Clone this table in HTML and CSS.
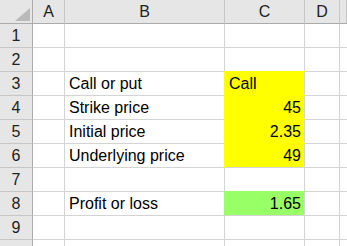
FILE: index.html
```html
<!DOCTYPE html>
<html lang="en">
<head>
  <meta charset="UTF-8" />
  <meta name="viewport" content="width=device-width, initial-scale=1.0"/>
  <title>Option payoff</title>
  <link rel="stylesheet" href="styles.css">
</head>
<body>

  <div class="sheet">
    <div class="row head">
      <div class="cell corner">
        <svg width="32" height="23" viewBox="0 0 32 23"><polygon points="15,21 30,21 30,8" fill="#b9b9b9"/></svg>
      </div>
      <div class="cell col">A</div>
      <div class="cell col">B</div>
      <div class="cell col">C</div>
      <div class="cell col">D</div>
      <div class="cell col"></div>
    </div>

    <div class="row">
      <div class="cell num">1</div>
      <div class="cell"></div><div class="cell"></div><div class="cell"></div><div class="cell"></div><div class="cell"></div>
    </div>
    <div class="row">
      <div class="cell num">2</div>
      <div class="cell"></div><div class="cell"></div><div class="cell"></div><div class="cell"></div><div class="cell"></div>
    </div>
    <div class="row">
      <div class="cell num">3</div>
      <div class="cell"></div>
      <div class="cell">Call or put</div>
      <div class="cell input">Call</div>
      <div class="cell"></div><div class="cell"></div>
    </div>
    <div class="row">
      <div class="cell num">4</div>
      <div class="cell"></div>
      <div class="cell">Strike price</div>
      <div class="cell input value">45</div>
      <div class="cell"></div><div class="cell"></div>
    </div>
    <div class="row">
      <div class="cell num">5</div>
      <div class="cell"></div>
      <div class="cell">Initial price</div>
      <div class="cell input value">2.35</div>
      <div class="cell"></div><div class="cell"></div>
    </div>
    <div class="row">
      <div class="cell num">6</div>
      <div class="cell"></div>
      <div class="cell">Underlying price</div>
      <div class="cell input value">49</div>
      <div class="cell"></div><div class="cell"></div>
    </div>
    <div class="row">
      <div class="cell num">7</div>
      <div class="cell"></div><div class="cell"></div><div class="cell"></div><div class="cell"></div><div class="cell"></div>
    </div>
    <div class="row">
      <div class="cell num">8</div>
      <div class="cell"></div>
      <div class="cell">Profit or loss</div>
      <div class="cell result value">1.65</div>
      <div class="cell"></div><div class="cell"></div>
    </div>
    <div class="row">
      <div class="cell num">9</div>
      <div class="cell"></div><div class="cell"></div><div class="cell"></div><div class="cell"></div><div class="cell"></div>
    </div>
    <div class="row">
      <div class="cell num"></div>
      <div class="cell"></div><div class="cell"></div><div class="cell"></div><div class="cell"></div><div class="cell"></div>
    </div>
  </div>

</body>
</html>
```

FILE: styles.css
```css
body {
  margin: 0;
  padding: 0;
  background: white;
  font-family: "Liberation Sans", Arial, sans-serif;
  font-size: 16px;
  color: #000;
  overflow: hidden;
}

.sheet {
  width: 347px;
  height: 246px;
  overflow: hidden;
}

.row {
  display: grid;
  grid-template-columns: 33px 32px 160px 80px 35px 1fr;
  height: 24px;
}

.cell {
  box-sizing: border-box;
  height: 24px;
  line-height: 23px;
  padding: 0 3px 0 4px;
  border-right: 1px solid #d4d4d4;
  border-bottom: 1px solid #d4d4d4;
  white-space: nowrap;
}

/* header strip */
.head .cell {
  background: #e6e6e6;
  border-right-color: #c6c6c6;
  border-bottom-color: #ababab;
  color: #222;
}

.col {
  text-align: center;
  padding: 1px 0 0;
  line-height: 22px;
}

.head .corner {
  padding: 0;
  line-height: 0;
  border-right-color: #ababab;
}

.num {
  background: #e6e6e6;
  border-right-color: #ababab;
  border-bottom-color: #c6c6c6;
  color: #222;
  text-align: center;
  padding: 0;
}

.value {
  text-align: right;
}

/* filled cells hide the gridlines on their left and top */
.input {
  background: #ffff00;
  box-shadow: -1px 0 0 #ffff00, 0 -1px 0 #ffff00, -1px -1px 0 #ffff00;
}

.result {
  background: #99ff66;
  box-shadow: -1px 0 0 #99ff66, 0 -1px 0 #99ff66, -1px -1px 0 #99ff66;
}
```
